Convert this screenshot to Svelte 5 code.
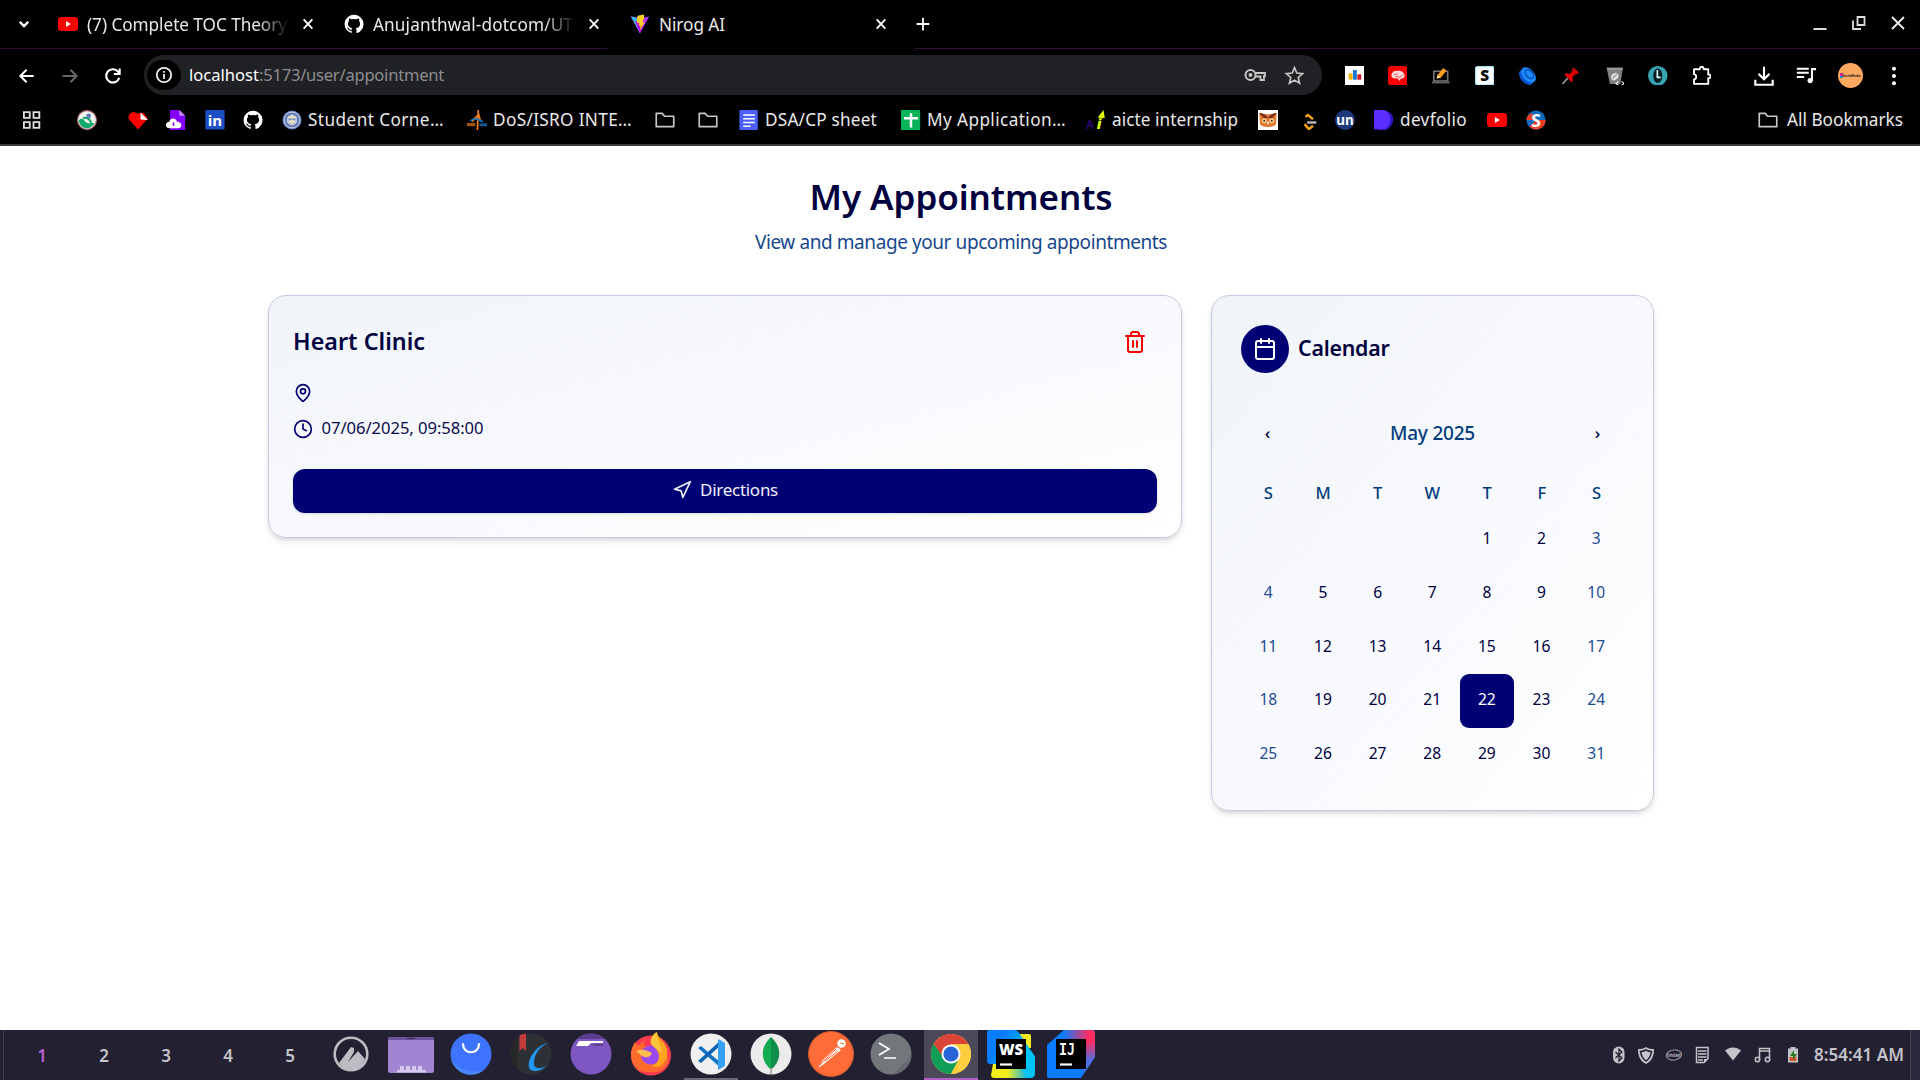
<script>
  // Tracks a label out (or in) so that it fills its intended width.
  function fit(node, width) {
    const apply = () => {
      node.style.letterSpacing = '0px';
      const natural = node.getBoundingClientRect().width;
      const count = Math.max(1, [...node.textContent].length);
      node.style.letterSpacing = `${(width - natural) / count}px`;
    };
    apply();
    requestAnimationFrame(apply);
  }

  const github =
    '<path fill="#fff" d="M12 .8a11.3 11.3 0 0 0-3.6 22c.6.1.8-.3.8-.6v-2.1c-3.2.7-3.9-1.4-3.9-1.4-.5-1.3-1.3-1.7-1.3-1.7-1-.7.1-.7.1-.7 1.2.1 1.8 1.2 1.8 1.2 1 1.8 2.7 1.3 3.4 1 .1-.8.4-1.3.7-1.6-2.500-.3-5.200-1.200-5.200-5.600 0-1.200.4-2.200 1.200-3-.1-.3-.5-1.500.1-3 0 0 1-.3 3.100 1.100a10.800 10.800 0 0 1 5.700 0c2.100-1.400 3.100-1.100 3.100-1.100.6 1.500.2 2.700.1 3 .7.8 1.200 1.800 1.200 3 0 4.400-2.700 5.300-5.200 5.600.4.400.8 1.100.8 2.100v3.200c0 .3.200.7.8.6A11.300 11.300 0 0 0 12 .8z"/>';
  const youtube =
    '<rect x="0" y="3.500" width="24" height="17" rx="4" fill="#f00"/><path d="M9.500 8.500v7l6-3.500z" fill="#fff"/>';
  const folder =
    '<path d="M1.500 4h7l3 3.500h11v12.500h-21z" fill="none" stroke="#c7c7c7" stroke-width="2" stroke-linejoin="round"/>';
  const close =
    '<path d="M5.500 5l13 14M18.500 5l-13 14" stroke="#fff" stroke-width="2.700" fill="none"/>';

  const tabs = [
    { icon: youtube, label: '(7) Complete TOC Theory', width: 200, fade: true },
    { icon: github, label: 'Anujanthwal-dotcom/UTI', width: 206, fade: true },
    {
      icon: '<path d="M1 3l11 20L23 3l-9 1.700z" fill="#b932ff"/><path d="M1 3l11 20 1-10-6-9z" fill="#3bb7ff"/><path d="M6 8l6 15 5-12z" fill="#c400ef"/><path d="M17 .5l-8 1.500-.8 9 3-.7-.8 4 2.200-.6-.8 6 6-10-3 .6 2-5z" fill="#ffd21e"/>',
      label: 'Nirog AI',
      width: 66,
      fade: false,
    },
  ];

  const extensions = [
    '<rect width="24" height="24" fill="#fff"/><rect x="4.500" y="9" width="4.800" height="8" rx="1" fill="#f4b400"/><rect x="9.800" y="5" width="4.800" height="12" rx="1" fill="#1976d2"/><rect x="15.200" y="10" width="4.800" height="7" rx="1" fill="#d81b28"/>',
    '<rect width="24" height="24" rx="4" fill="#f80000"/><path d="M4 12c0-4 4-7 8-6 4-1 8 2 8.500 6 0 3-3 4-5 3.500l-1 3-3-3.500c-4 1-7-.5-7.500-3z" fill="#ffdada"/><path d="M7 11c2-2 4 1 5-2m1 6c0-3 4-1 5-4M9 14c1-2 3 0 4-2" stroke="#e33" fill="none"/>',
    '<path d="M3.500 6.500h17v12h-17z" fill="none" stroke="#777" stroke-width="2"/><path d="M1 19h22v2.500H1z" fill="#665f5a"/><path d="M8 11l7-8.500 4 3-7 9-5 1z" fill="#ff9d1c"/><path d="M8 11l4 3.500-5 1z" fill="#ffe0a8"/>',
    '<rect x=".7" y=".7" width="22.600" height="22.600" rx="2" fill="#fff" stroke="#9fe5f5" stroke-width="1.400"/><text x="12" y="19" text-anchor="middle" font-size="19" font-weight="800" font-family="Open Sans, sans-serif" fill="#111">S</text>',
    '<ellipse cx="10" cy="14" rx="11" ry="6.500" transform="rotate(48 10 14)" fill="#0a55cf"/><ellipse cx="13" cy="11" rx="11" ry="7" transform="rotate(48 13 11)" fill="#1a8cff"/><ellipse cx="14" cy="10" rx="6.500" ry="4" transform="rotate(48 14 10)" fill="none" stroke="#084aa8" stroke-width="1.800"/>',
    '<path d="M2 22l8-9" stroke="#999" stroke-width="2"/><path d="M4 10c3-2 5-1 6 0l4-4c-.5-2 0-3 1.500-4L22 8c-1 2-2.500 2-4 2l-4 4c1 2 1 4-1 6z" fill="#e80000"/><path d="M12 10l5-5M14 13l5-5" stroke="#7d0000"/>',
    '<path d="M2 2h20l-3 20H6z" fill="#808080"/><path d="M2 2h20l-.5 2.500h-19z" fill="#9a9a9a"/><ellipse cx="12" cy="13" rx="5" ry="4" transform="rotate(-40 12 13)" fill="#ddd"/><path d="M9 15l6-5" stroke="#888" stroke-width="1.300"/><path d="M16.500 19l-3 2.500 3 2.200m4-4.700l3 2.500-3 2.200" stroke="#eee" stroke-width="1.400" fill="none"/>',
    '<circle cx="12" cy="12" r="12" fill="#3aa5b2"/><ellipse cx="12" cy="12" rx="5.500" ry="9" fill="#0a1d22"/><path d="M11.500 5v9h4" stroke="#dff" stroke-width="2" fill="none"/>',
    '<path d="M2.500 4H9.500c0-4 5-4 5 0H20v6.500c4-.5 4 5 0 4.500V22H2.500v-5.500c3.500-.5 3.500-6 0-6.500z" fill="none" stroke="#fff" stroke-width="2.300" stroke-linejoin="round"/>',
  ];

  const bookmarks = [
    { slot: 56, icon: '<path d="M3.500 2.500h7v7h-7zM15 2.500h7v7h-7zM3.500 14.500h7v7h-7zM15 14.500h7v7h-7z" fill="none" stroke="#ddd" stroke-width="2.200"/>' },
    { slot: 51, icon: '<circle cx="12" cy="12" r="11.300" fill="#f2f2f2" stroke="#b06a70" stroke-width="1.400"/><path d="M2 13c2-4 5-3 7 0s5 4 7 2l5 1c-4 8-16 9-19-3z" fill="#0fa968"/><path d="M7 10c4-2 8 0 10 5" stroke="#0fa968" stroke-width="2.500" fill="none"/><circle cx="14" cy="7" r="2.800" fill="#5c7ab5"/>' },
    { slot: 38, icon: '<path d="M12 23.500L1 11C-1 4 7 0 12 5c3-4 12-1 11 6z" fill="#f00"/><path d="M15 3v8.500l9 .5z" fill="#fff"/><path d="M17 2l7 8V1z" fill="#000"/>' },
    { slot: 39, icon: '<path d="M5 0h11l7 7v17H5z" fill="#8500ff"/><path d="M16 0v7h7z" fill="#c48bff"/><path d="M4 22c-6 0-5-8 0-8 1-5 8-5 9 0 7 0 7 8 1 8z" fill="#fff"/><path d="M9 15v4" stroke="#8500ff" stroke-width="2"/>' },
    { slot: 38, icon: '<rect x=".5" width="23" height="23.500" rx="1.500" fill="#1d4fc4"/><text x="12" y="19" text-anchor="middle" font-size="18" font-weight="700" font-family="Open Sans, sans-serif" fill="#fff">in</text>' },
    { slot: 39, icon: github },
    { slot: 185, label: 'Student Corne…', width: 136, icon: '<circle cx="12" cy="12" r="11.500" fill="#6279b5"/><circle cx="12" cy="12" r="9.500" fill="none" stroke="#c9d2ea" stroke-width="1.200"/><circle cx="12" cy="12" r="6.500" fill="#b9c3dc"/><path d="M7 9h10M12 6v11M8 14h8" stroke="#efe3b4" stroke-width="1.800"/><path d="M8 11h8" stroke="#4f68a8" stroke-width="1"/>' },
    { slot: 188, label: 'DoS/ISRO INTE…', width: 139, icon: '<path d="M13.500 0l-1 24M6 14l8-9 2 8" stroke="#f57f17" stroke-width="2" fill="none"/><path d="M4 13c5-4 9-2 15 1" stroke="#1279c9" stroke-width="2" fill="none"/><path d="M0 15.500h10v4H0z" fill="#a4530c"/><path d="M15 16h9v3.500h-9z" fill="#125a94"/>' },
    { slot: 43, icon: folder },
    { slot: 41, icon: folder },
    { slot: 162, label: 'DSA/CP sheet', width: 112, icon: '<rect x=".5" width="22" height="24" rx="1" fill="#4c5ffb"/><path d="M5 6h14M5 10.500h14M5 15h14M5 19.500h9" stroke="#fff" stroke-width="2"/>' },
    { slot: 185, label: 'My Application…', width: 139, icon: '<rect width="23" height="24" rx="1" fill="#08b35a"/><path d="M12 4v17M3.500 10h17" stroke="#fff" stroke-width="3"/>' },
    { slot: 172, label: 'aicte internship', width: 126, icon: '<text x="0" y="22.500" font-size="15" font-weight="600" font-family="Open Sans, sans-serif" fill="#30057b">A</text><path d="M14 9l7-9 1.500 10z" fill="#e6ff00"/><text x="13" y="22.500" font-size="17" font-weight="800" font-style="italic" font-family="Open Sans, sans-serif" fill="#dfff17">i</text>' },
    { slot: 40, icon: '<rect width="24" height="24" fill="#fff"/><path d="M1.500 3.500c5 2 16 2 21 0l-1 14c-3 4-16 4-19 0z" fill="#e07a35"/><path d="M1.500 3.500c6 0 8 3 10.500 6 2.500-3 4.500-6 10.500-6l-5.500 6H7z" fill="#7b2a1c"/><circle cx="7.500" cy="13" r="2.900" fill="#ffd89a"/><circle cx="16.500" cy="13" r="2.900" fill="#ffd89a"/><circle cx="7.500" cy="13" r="1.200" fill="#4a2a18"/><circle cx="16.500" cy="13" r="1.200" fill="#4a2a18"/><path d="M10.500 14.500h3L12 18z" fill="#fff"/>' },
    { slot: 37, icon: '<path d="M9 8l3-2 6 5M8 17l5 6 5-4" stroke="#f7a11a" stroke-width="3" fill="none"/><path d="M11 15h11" stroke="#b5b5b5" stroke-width="3"/>' },
    { slot: 39, icon: '<circle cx="12" cy="12" r="12" fill="#1e3a7d"/><text x="12" y="17.500" text-anchor="middle" font-size="16" font-weight="700" font-family="Open Sans, sans-serif" fill="#fff">un</text>' },
    { slot: 113, label: 'devfolio', width: 67, icon: '<path d="M6 1h8c12 2 12 18 0 23H4z" fill="#3315c9"/><path d="M0 0h11c11 1 11 20 1 23H0z" fill="#5b2dff"/>' },
    { slot: 39, icon: youtube },
    { slot: 24, icon: '<circle cx="12" cy="12" r="11.500" fill="#0f6cba"/><path d="M12 12h11.500A11.500 11.500 0 0 1 4 20z" fill="#ef3d23"/><path d="M.5 12H8v-8C3 5 .5 8 .5 12z" fill="#ef3d23"/><text x="12" y="20" text-anchor="middle" font-size="21" font-weight="700" font-family="Open Sans, sans-serif" fill="#fff">S</text>' },
  ];

  const workspaces = [1, 2, 3, 4, 5];

  const disc = (fill) => `<circle cx="24" cy="24" r="20.500" fill="${fill}"/>`;
  const apps = [
    { icon: '<circle cx="24" cy="24" r="16.300" fill="none" stroke="#bdbcc2" stroke-width="2.600"/><path d="M12 33l12-16 3 1 0 4-6 10 10-11 7 8c-3 12-19 15-26 4z" fill="#bdbcc2"/>' },
    { icon: '<rect x="1" y="7" width="46" height="36" rx="2.500" fill="#a184d2"/><path d="M1 10V9a2 2 0 0 1 2-2h42a2 2 0 0 1 2 2v1z" fill="#6b5299"/><path d="M20 8.500h8" stroke="#44306d" stroke-width="1.500"/><path d="M10 40h29v2.500H10zM13 36h4v5h-4zM19 36h4v5h-4zM25 36h4v5h-4zM31 36h4v5h-4z" fill="#d5c8eb"/>' },
    { icon: disc('#3d73ff') + '<path d="M4 29c5 10 22 15 33 11A20.500 20.500 0 0 1 4 29z" fill="#4a87ff"/><path d="M16 14c0 11 16 11 16 0" stroke="#fff" stroke-width="2.200" fill="none" stroke-linecap="round"/>' },
    { icon: disc('#2d3136') + '<path d="M11 8v32A20.500 20.500 0 0 1 11 8z" fill="#282828"/><path d="M12.500 5L19 3.500V21l-3.200-3-3.300 3z" fill="#c43b3b"/><path d="M41 13C25 16 15 40 27 41c5 0 10-2 12-5-6 4-13 2-12-3 0-8 5-16 14-20z" fill="#2196f3"/>' },
    { icon: disc('#7e57c2') + '<path d="M10 9a20.500 20.500 0 0 1 28 0z" fill="#5b3e8f"/><path d="M12 11h24v2H24l-3 3H9z" fill="#fff"/><path d="M26 15h10" stroke="#553887" stroke-width="1.500"/>' },
    { icon: '<circle cx="24" cy="25.500" r="20" fill="#ff3b4d"/><path d="M4 25c0-6 2-9 4-13l3 4 6-5v5c4 0 8 2 9 5 2-10 12-5 15 6 2 9-8 17-19 15C12 43 4 36 4 25z" fill="#ff6b2c"/><circle cx="23.500" cy="25" r="9.500" fill="#9b49f0"/><path d="M9 21c6-3 12 0 16 2-2 5-6 5-10 3z" fill="#ffbd4f"/><path d="M24 12c0-6 3-9 6-10 0 6 12 11 10 22-1 11-10 15-15 12 9-3 8-12 4-17-2-2-5-4-5-7z" fill="#ffa51f"/><path d="M30 2c-6 5-8 9-5 13l10 8c-1-9-5-12-5-21z" fill="#ffc53e"/>' },
    { running: true, icon: disc('#f0f0f0') + '<path d="M11 18l3-2 20 17v5z" fill="#1173c5"/><path d="M11 31l3 2 20-18v-5z" fill="#0c62b5"/><path d="M31 9l7 4v23l-7 4z" fill="#35a0f4"/>' },
    { icon: disc('#ebebeb') + '<path d="M24 7c-11 10-11 23 0 33z" fill="#13aa52"/><path d="M24 7c11 10 11 23 0 33z" fill="#0f8e4b"/><path d="M24 38v6" stroke="#aaa" stroke-width="1.800"/>' },
    { icon: '<circle cx="24" cy="24" r="22.500" fill="#ff6c37" stroke="#d45a2e"/><circle cx="34.500" cy="13.500" r="4.200" fill="#fff"/><path d="M30 17L16 30l-5 8 6-4 17-14z" fill="#fff"/><path d="M29 19L13 35M31 21L18 31" stroke="#ff6c37" stroke-width="1"/><path d="M33 13l4 1" stroke="#ff6c37"/>' },
    { icon: disc('#72777c') + '<path d="M44.500 26L26 44.500A20.500 20.500 0 0 0 44.500 26z" fill="#656a6f"/><path d="M12 13l10 6-10 6M17 28h12" stroke="#fff" stroke-width="1.700" fill="none"/>' },
    { active: true, icon: '<circle cx="24" cy="24" r="20" fill="#ffcd40"/><path d="M6.700 14A20 20 0 0 1 41.300 14L24 15l-8.500 12z" fill="#db4437"/><path d="M6.700 14A20 20 0 0 0 24 44l8-15-15-1z" fill="#0f9d58"/><path d="M24 14h17.300A20 20 0 0 1 24 44l8-15z" fill="#ffcd40"/><circle cx="24" cy="24" r="9.500" fill="#fff"/><circle cx="24" cy="24" r="7.600" fill="#2965d8"/>' },
    { icon: '<defs><linearGradient id="ws-blue" x1="0" y1="0" x2="1" y2=".6"><stop offset=".3" stop-color="#087cfa"/><stop offset=".8" stop-color="#00c3f5"/></linearGradient><linearGradient id="ws-yellow" x1="0" y1="0" x2="1" y2="0"><stop offset=".45" stop-color="#f2ee1c"/><stop offset="1" stop-color="#12b8e6"/></linearGradient></defs><path d="M31 4h11q2 0 2 2v12H31z" fill="#f2ea1f"/><path d="M2 0h26q2 0 4 3l15 22q1 1 1 3v16q-1 4-4 4H30L10 34H2q-2-1-2-3V2q0-2 2-2z" fill="url(#ws-blue)"/><path d="M6 34h26l8 14H7q-3 0-3-3z" fill="url(#ws-yellow)"/><rect x="9" y="9" width="30" height="30" fill="#000"/><path d="M13 34.500h12" stroke="#fff" stroke-width="2.200"/><text x="24" y="24.500" text-anchor="middle" font-size="15" font-weight="800" font-family="Open Sans, sans-serif" fill="#fff">WS</text>' },
    { icon: '<defs><linearGradient id="ij-edge" x1="0" y1="0" x2="0" y2="1"><stop offset=".1" stop-color="#ff2d62"/><stop offset=".65" stop-color="#4d6fe0"/></linearGradient><linearGradient id="ij-top" x1="0" y1="0" x2="1" y2="0"><stop offset=".25" stop-color="#0b7cff"/><stop offset=".85" stop-color="#ff2d62"/></linearGradient></defs><path d="M17 0h29l2 2v25L34 48H2q-2 0-2-2V15z" fill="#0b7cff"/><path d="M17 0h29l2 2v9H6z" fill="url(#ij-top)"/><path d="M37 8h11v19L37 43z" fill="url(#ij-edge)"/><rect x="9" y="9" width="30" height="30" fill="#000"/><path d="M13 34.500h12" stroke="#fff" stroke-width="2.200"/><text x="12" y="24.500" font-size="16" font-weight="700" font-family="DejaVu Sans Mono, monospace" fill="#fff" textLength="16" lengthAdjust="spacingAndGlyphs">IJ</text>' },
  ];

  const tray = [
    { slot: 27, icon: '<rect x="6" y="3.500" width="11.500" height="17" rx="5.700" fill="#c4c3c9"/><path d="M8.500 9l6.500 6-3 3V6l3 3-6.500 6" stroke="#222031" stroke-width="1.300" fill="none"/>' },
    { slot: 28, icon: '<path d="M12 4c3 2 5 2 8 2 0 7-2 12-8 15-6-3-8-8-8-15 3 0 5 0 8-2z" fill="#c4c3c9"/><path d="M12 7c2 1 4 1.500 5.500 1.500C17 13 15 16 12 18c-3-2-5-5-5.500-9.500C8 8.500 10 8 12 7z" fill="none" stroke="#222031" stroke-width="1.500"/>' },
    { slot: 28, icon: '<ellipse cx="12" cy="12" rx="7.700" ry="5" fill="none" stroke="#8e8c98" stroke-width="1.100" transform="rotate(-8 12 12)"/><text x="12" y="14" text-anchor="middle" font-size="6" font-weight="700" font-family="Open Sans, sans-serif" fill="#bbb9c2">intel</text>' },
    { slot: 31, icon: '<path d="M6.500 4.500h11.500v11l-4 4H6.500z" fill="none" stroke="#c4c3c9" stroke-width="1.500"/><path d="M8 8h8.500M8 11h8.500M8 14h8.500M8 17h5" stroke="#c4c3c9" stroke-width="1.300"/><path d="M14 20v-4h4z" fill="#c4c3c9"/>' },
    { slot: 30, icon: '<path d="M4 7.500c5-4 11-4 16 0l-8 10z" fill="#c4c3c9"/>' },
    { slot: 30, icon: '<path d="M8.500 17V5.500h10V16M8.500 8h10" stroke="#c4c3c9" stroke-width="1.500" fill="none"/><circle cx="6.500" cy="16.500" r="2.200" fill="none" stroke="#c4c3c9" stroke-width="1.500"/><circle cx="16.500" cy="16.500" r="2.200" fill="none" stroke="#c4c3c9" stroke-width="1.500"/>' },
    { slot: 24, icon: '<path d="M9.500 4h5v1.500H17v14H7v-14h2.500z" fill="#c4c3c9"/><rect x="8.500" y="14" width="7" height="4" fill="#d8562c"/><path d="M13 7l-4 6h3v4l4-6h-3z" fill="#287a1d"/>' },
  ];

  const weekdays = ['S', 'M', 'T', 'W', 'T', 'F', 'S'];
  const cells = Array.from({ length: 35 }, (_, i) => {
    const day = i - 3;
    return { day: day > 0 ? day : '', weekend: i % 7 === 0 || i % 7 === 6, today: day === 22 };
  });
</script>

<div class="screen">
  <header class="browser">
    <div class="tab-strip">
      <div class="tab-menu">
        <svg viewBox="0 0 24 24" width="20" height="20"><path d="M7 9.500l5 5 5-5" fill="none" stroke="#fff" stroke-width="2.800" /></svg>
      </div>
      {#each tabs as tab}
        <div class="tab" class:current={!tab.fade}>
          <svg viewBox="0 0 24 24" width="20" height="20">{@html tab.icon}</svg>
          <div class="tab-title" class:fade={tab.fade}><span class="fitted" use:fit={tab.width}>{tab.label}</span></div>
          <svg class="tab-close" viewBox="0 0 24 24" width="16" height="16">{@html close}</svg>
        </div>
      {/each}
      <div class="strip-rest">
        <svg viewBox="0 0 24 24" width="18" height="18"><path d="M12 3.500v17M3.500 12h17" stroke="#fff" stroke-width="2.400" /></svg>
        <div class="window-buttons">
          <svg viewBox="0 0 16 16" width="16" height="16"><path d="M1.500 14h13" stroke="#ddd" stroke-width="2" /></svg>
          <svg viewBox="0 0 16 16" width="16" height="16"><path d="M6.500 2h7v8h-7zM2 5.500V14h8" fill="none" stroke="#ddd" stroke-width="1.800" /></svg>
          <svg viewBox="0 0 16 16" width="16" height="16"><path d="M2 2l12 12M14 2L2 14" stroke="#eee" stroke-width="1.800" /></svg>
        </div>
      </div>
    </div>

    <div class="toolbar">
      <div class="nav-icons">
        <svg viewBox="0 0 24 24" width="20" height="20"><path d="M20 12H5M11.500 4.500L4 12l7.500 7.500" fill="none" stroke="#fff" stroke-width="2.400" /></svg>
        <svg viewBox="0 0 24 24" width="20" height="20"><path d="M3 12h16M12.500 4.500L20 12l-7.500 7.500" fill="none" stroke="#666" stroke-width="2.400" /></svg>
        <svg viewBox="0 0 24 24" width="20" height="20"><path d="M19.500 14a8 8 0 1 1-1.300-7L20 9M20 3v6.500h-7" fill="none" stroke="#fff" stroke-width="2.500" /></svg>
      </div>
      <div class="address">
        <div class="site-info">
          <svg viewBox="0 0 20 20" width="18" height="18"><circle cx="10" cy="10" r="8" fill="none" stroke="#eee" stroke-width="2" /><path d="M10 9v5.500M10 5.500v2" stroke="#eee" stroke-width="2" /></svg>
        </div>
        <span class="url"><span class="host fitted" use:fit={70}>localhost</span><span class="fitted" use:fit={185}>:5173/user/appointment</span></span>
        <svg class="key" viewBox="0 0 24 24" width="24" height="24"><circle cx="7.500" cy="12" r="5" fill="none" stroke="#c7c7c7" stroke-width="2" /><circle cx="7.500" cy="12" r="2" fill="#c7c7c7" /><path d="M12 10h10v3h-1v4h-3.500v-3.500H12" fill="none" stroke="#c7c7c7" stroke-width="1.800" /></svg>
        <svg viewBox="0 0 24 24" width="21" height="21"><path d="M12 3l2.600 6.200 6.700.6-5 4.400 1.500 6.600L12 17.300l-5.800 3.500 1.500-6.600-5-4.400 6.700-.6z" fill="none" stroke="#c7c7c7" stroke-width="1.900" /></svg>
      </div>
      <div class="extensions">
        {#each extensions as icon}
          <svg viewBox="0 0 24 24" width="19.500" height="19.500">{@html icon}</svg>
        {/each}
      </div>
      <div class="browser-actions">
        <svg viewBox="0 0 24 24" width="22" height="22"><path d="M12 2v13M6 9.500l6 6 6-6M2.500 16v5.500h19V16" fill="none" stroke="#fff" stroke-width="2.300" /></svg>
        <svg viewBox="0 0 24 24" width="22" height="22"><path d="M2 4h13M2 8.500h13M2 13h8M18.500 17V4.500H23" fill="none" stroke="#fff" stroke-width="2.200" /><circle cx="16.500" cy="17" r="2.800" fill="#fff" /></svg>
        <div class="avatar"><i></i><span>SocialMedia</span></div>
        <svg viewBox="0 0 24 24" width="22" height="22"><circle cx="12" cy="4" r="2.200" fill="#fff" /><circle cx="12" cy="12" r="2.200" fill="#fff" /><circle cx="12" cy="20" r="2.200" fill="#fff" /></svg>
      </div>
    </div>

    <nav class="bookmarks">
      {#each bookmarks as b}
        <div class="bookmark" style:width="{b.slot}px">
          <svg viewBox="0 0 24 24" width="20" height="20">{@html b.icon}</svg>
          {#if b.label}<span class="fitted" use:fit={b.width}>{b.label}</span>{/if}
        </div>
      {/each}
      <div class="bookmark all">
        <svg viewBox="0 0 24 24" width="20" height="20">{@html folder}</svg>
        <span class="fitted" use:fit={116}>All Bookmarks</span>
      </div>
    </nav>
  </header>

  <main>
    <h1><span class="fitted" use:fit={303}>My Appointments</span></h1>
    <p class="subtitle"><span class="fitted" use:fit={412}>View and manage your upcoming appointments</span></p>

    <div class="columns">
      <section class="card appointment">
        <div class="card-head">
          <h2><span class="fitted" use:fit={132}>Heart Clinic</span></h2>
          <button class="delete" aria-label="Delete appointment">
            <svg viewBox="0 0 24 24" width="24" height="24" class="line"><path d="M3 6h18M19 6v14a2 2 0 0 1-2 2H7a2 2 0 0 1-2-2V6M8 6V4a2 2 0 0 1 2-2h4a2 2 0 0 1 2 2v2M10 11v6M14 11v6" /></svg>
          </button>
        </div>
        <div class="details">
          <div class="detail">
            <svg viewBox="0 0 24 24" width="20" height="20" class="line"><path d="M20 10c0 5-5.500 10.200-7.400 11.800a1 1 0 0 1-1.200 0C9.500 20.200 4 15 4 10a8 8 0 0 1 16 0" /><circle cx="12" cy="10" r="3" /></svg>
          </div>
          <div class="detail">
            <svg viewBox="0 0 24 24" width="20" height="20" class="line"><circle cx="12" cy="12" r="10" /><path d="M12 6v6l4 2" /></svg>
            <span class="fitted" use:fit={162}>07/06/2025, 09:58:00</span>
          </div>
        </div>
        <button class="directions">
          <svg viewBox="0 0 24 24" width="20" height="20" class="line"><path d="M3 11l19-9-9 19-2-8z" /></svg>
          <span class="fitted" use:fit={78}>Directions</span>
        </button>
      </section>

      <section class="card calendar">
        <div class="calendar-head">
          <div class="badge">
            <svg viewBox="0 0 24 24" width="24" height="24" class="line"><path d="M8 2v4M16 2v4M3 10h18" /><rect x="3" y="4" width="18" height="18" rx="2" /></svg>
          </div>
          <h3><span class="fitted" use:fit={91.500}>Calendar</span></h3>
        </div>
        <div class="month">
          <button aria-label="Previous month">‹</button>
          <span class="fitted" use:fit={85}>May 2025</span>
          <button aria-label="Next month">›</button>
        </div>
        <div class="week">
          {#each weekdays as name}<span>{name}</span>{/each}
        </div>
        <div class="days">
          {#each cells as cell}
            <span class:weekend={cell.weekend} class:today={cell.today}>{cell.day}</span>
          {/each}
        </div>
      </section>
    </div>
  </main>

  <footer class="taskbar">
    <div class="workspaces">
      {#each workspaces as n}<span class:selected={n === 1}>{n}</span>{/each}
    </div>
    <div class="apps">
      {#each apps as app}
        <div class="app" class:running={app.running} class:active={app.active}>
          <svg viewBox="0 0 48 48" width="48" height="48">{@html app.icon}</svg>
        </div>
      {/each}
    </div>
    <div class="tray">
      {#each tray as item}
        <div class="tray-item" style:width="{item.slot}px">
          <svg viewBox="0 0 24 24" width="24" height="24">{@html item.icon}</svg>
        </div>
      {/each}
      <span class="clock fitted" use:fit={90}>8:54:41 AM</span>
    </div>
    <div class="show-desktop"></div>
  </footer>
</div>

<style>
  :global(body) {
    margin: 0;
    background: #fff;
  }
  .screen {
    width: 1920px;
    height: 1080px;
    display: flex;
    flex-direction: column;
    overflow: hidden;
    font-family: 'Noto Sans', 'Open Sans', sans-serif;
  }
  .screen :global(*) {
    box-sizing: border-box;
  }
  svg {
    display: block;
    flex: none;
  }
  .fitted {
    display: inline-block;
    white-space: nowrap;
  }
  .line {
    fill: none;
    stroke: currentColor;
    stroke-width: 2;
    stroke-linecap: round;
    stroke-linejoin: round;
  }
  button {
    border: 0;
    padding: 0;
    background: none;
    font: inherit;
    color: inherit;
  }
  h1, h2, h3, p {
    margin: 0;
  }

  /* Browser window */
  .browser {
    height: 146px;
    background: #000;
    border-bottom: 2px solid #3b3a3b;
    color: #e9e9e9;
    font-size: 17.2px;
    flex: none;
  }
  .tab-strip {
    display: flex;
    height: 49px;
  }
  .tab-menu {
    width: 48px;
    padding: 14px 0 0 14px;
    border-bottom: 1px solid #2c102f;
  }
  .tab {
    display: flex;
    align-items: center;
    width: 286px;
    padding: 0 0 0 10px;
    border-bottom: 1px solid #2c102f;
  }
  .tab:nth-child(3) {
    width: 273px;
    padding-left: 10px;
  }
  .tab.current {
    width: 307px;
    padding-left: 23px;
    border-bottom-color: #000;
  }
  .tab-title {
    width: 201px;
    margin-left: 9px;
    overflow: hidden;
  }
  .tab.current .tab-title {
    width: 202px;
  }
  .tab-title.fade {
    mask-image: linear-gradient(90deg, #000 170px, transparent 202px);
  }
  .tab-close {
    margin-left: 12px;
  }
  .strip-rest {
    flex: 1;
    display: flex;
    justify-content: space-between;
    padding: 15px 14px 0 0;
    border-bottom: 1px solid #2c102f;
  }
  .window-buttons {
    display: flex;
    gap: 23px;
  }
  .toolbar {
    display: flex;
    align-items: center;
    height: 53px;
  }
  .nav-icons {
    display: flex;
    gap: 23px;
    width: 144px;
    padding-left: 17px;
  }
  .address {
    display: flex;
    align-items: center;
    width: 1178px;
    height: 40px;
    margin-top: -1px;
    padding: 0 17px 0 3px;
    border-radius: 20px;
    background: #202124;
  }
  .site-info {
    display: grid;
    place-items: center;
    width: 34px;
    height: 30px;
    border-radius: 16px;
    background: #000;
  }
  .url {
    flex: 1;
    margin-left: 8px;
    padding-bottom: 1px;
    font-size: 16.6px;
    white-space: nowrap;
    color: #8d8d90;
  }
  .host {
    color: #fff;
  }
  .key {
    margin-right: 17px;
  }
  .extensions {
    display: flex;
    gap: 23.900px;
    margin-left: 22.500px;
  }
  .browser-actions {
    display: flex;
    align-items: center;
    gap: 20.500px;
    margin-left: 41.500px;
  }
  .avatar {
    display: flex;
    align-items: center;
    justify-content: center;
    width: 25px;
    height: 25px;
    border-radius: 50%;
    background: #ffa860;
  }
  .avatar i {
    width: 3px;
    height: 5px;
    background: linear-gradient(#e0247c 50%, #1c8ed0 50%);
  }
  .avatar span {
    font-size: 3px;
    font-weight: 700;
    color: #222;
  }
  .bookmarks {
    display: flex;
    align-items: center;
    height: 37px;
    padding: 0 17px 1px 21px;
  }
  .bookmark {
    display: flex;
    align-items: center;
    flex: none;
  }
  .bookmark .fitted {
    margin-left: 6px;
    padding-bottom: 1px;
  }
  .bookmark.all {
    margin-left: auto;
  }
  .bookmark.all .fitted {
    margin-left: 9px;
  }

  /* Appointments page */
  main {
    flex: 1;
    padding: 29px 266px 0 268px;
    background: #fff;
    color: #00003f;
  }
  h1 {
    text-align: center;
    font-size: 35px;
    font-weight: 600;
    line-height: 44px;
  }
  .subtitle {
    margin-top: 8px;
    text-align: center;
    font-size: 19px;
    line-height: 31px;
    color: #17478b;
  }
  .columns {
    display: grid;
    grid-template-columns: 914px 443px;
    gap: 29px;
    align-items: start;
    margin-top: 37px;
  }
  .card {
    border: 1px solid #c8c8e2;
    border-radius: 18px;
    background: linear-gradient(to bottom right, #f0f4f8, #f8f9fd 50%, #fff);
    box-shadow: 0 4px 7px -1px rgb(0 0 0 / 12%), 0 2px 4px -2px rgb(0 0 0 / 12%);
  }
  .appointment {
    height: 243px;
    padding: 24px;
  }
  .card-head {
    display: flex;
    justify-content: space-between;
    align-items: center;
    height: 44px;
  }
  h2 {
    padding-bottom: 2px;
    font-size: 23.300px;
    font-weight: 600;
  }
  .delete {
    display: grid;
    place-items: center;
    width: 44px;
    height: 44px;
    color: #f00;
  }
  .details {
    display: grid;
    gap: 9px;
    margin-top: 15px;
    margin-left: -.5px;
    font-size: 16.600px;
    color: #00005c;
  }
  .detail {
    display: flex;
    align-items: center;
    gap: 9px;
    height: 27px;
  }
  .detail svg {
    color: #000075;
  }
  .detail span {
    padding-bottom: 2px;
    color: #0b0b4a;
  }
  .directions {
    display: flex;
    align-items: center;
    justify-content: center;
    gap: 8px;
    width: 864px;
    height: 44px;
    margin-top: 27px;
    padding-bottom: 3px;
    border-radius: 12px;
    background: #000075;
    box-shadow: 0 1px 3px rgb(0 0 0 / 14%);
    font-size: 17px;
    color: #f0f0fa;
  }
  .calendar {
    height: 516px;
    padding: 29px;
  }
  .calendar-head {
    display: flex;
    align-items: center;
    gap: 9px;
  }
  .badge {
    display: grid;
    place-items: center;
    width: 48px;
    height: 48px;
    border-radius: 50%;
    background: #000075;
    color: #fff;
  }
  h3 {
    padding-bottom: 4px;
    font-size: 21.300px;
    font-weight: 600;
  }
  .month {
    display: flex;
    align-items: center;
    justify-content: space-between;
    height: 48px;
    margin-top: 36px;
    font-size: 19px;
    font-weight: 500;
    color: #003d7c;
  }
  .month button {
    width: 53px;
    height: 48px;
    padding-bottom: 2px;
    font-size: 17px;
    color: #00003f;
  }
  .week {
    display: grid;
    grid-template-columns: repeat(7, 54.700px);
    height: 37px;
    margin-top: 17px;
    line-height: 37px;
    text-align: center;
    font-size: 16.600px;
    font-weight: 500;
    color: #003d7c;
  }
  .days {
    display: grid;
    grid-template-columns: repeat(7, 54.650px);
    grid-auto-rows: 53.700px;
    margin-top: 2px;
  }
  .days span {
    display: grid;
    place-items: center;
    padding-bottom: 3px;
    border-radius: 9px;
    font-size: 15.600px;
  }
  .days .weekend {
    color: #1f4d92;
  }
  .days .today {
    background: #000075;
    color: #fff;
  }

  /* Desktop taskbar */
  .taskbar {
    display: flex;
    flex: none;
    height: 50px;
    background: #222031;
    color: #c4c3c9;
  }
  .workspaces {
    display: flex;
    margin-left: 3px;
    width: 321px;
    padding-left: 7px;
    border-left: 1px solid #3f3c52;
    line-height: 51px;
    font-size: 17px;
    font-weight: 600;
  }
  .workspaces span {
    width: 62px;
    text-align: center;
  }
  .workspaces .selected {
    color: #b562cd;
  }
  .apps {
    display: flex;
    gap: 6px;
  }
  .app {
    width: 54px;
    height: 50px;
    padding-left: 3px;
  }
  .app.running {
    box-shadow: inset 0 -2px #6c6a79;
  }
  .app.active {
    background: #4c4a5a;
    box-shadow: inset 0 -2px #b65ec8;
  }
  .tray {
    display: flex;
    align-items: center;
    margin-left: auto;
    margin-right: 6px;
    font-size: 17px;
    font-weight: 600;
  }
  .clock {
    margin-left: 9px;
    padding-bottom: 1px;
  }
  .show-desktop {
    width: 10px;
    border-left: 1px solid #4a4759;
    background: #2a283a;
  }
</style>
